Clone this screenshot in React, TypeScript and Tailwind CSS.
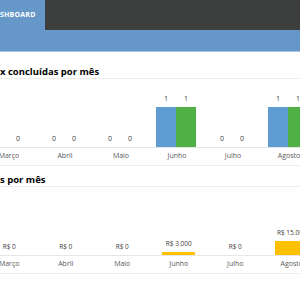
const months = ["Março", "Abril", "Maio", "Junho", "Julho", "Agosto"];

const tasks = [
  { a: 0, b: 0 },
  { a: 0, b: 0 },
  { a: 0, b: 0 },
  { a: 1, b: 1 },
  { a: 0, b: 0 },
  { a: 1, b: 1 },
];

const revenue = [0, 0, 0, 3000, 0, 15000];

function fmt(v: number) {
  return "R$ " + v.toLocaleString("pt-BR");
}

function Bar({ value, color, scale, width }: { value: number; color: string; scale: number; width: number }) {
  return (
    <div className="flex flex-col items-center justify-end" style={{ width }}>
      <span className="text-[7px] leading-[8px] text-[#404040] whitespace-nowrap mb-[4px]">{value}</span>
      {value > 0 && <div className={color} style={{ height: value * scale, width }} />}
    </div>
  );
}

function MonthRow({ colWidth }: { colWidth: string }) {
  return (
    <div className="flex ml-[-19px] h-[18px] items-center border-b border-[#ececec]">
      {months.map((m) => (
        <div key={m} className={`${colWidth} shrink-0 text-center text-[7px] text-[#595959]`}>
          {m}
        </div>
      ))}
    </div>
  );
}

export default function App() {
  return (
    <div
      className="w-[300px] h-[300px] overflow-hidden bg-white"
      style={{ fontFamily: '"Open Sans", "Liberation Sans", sans-serif' }}
    >
      <div className="flex h-[30px]">
        <div className="w-[45px] bg-[#6598c9] flex items-center">
          <span className="text-[7px] font-bold text-white tracking-[0.2px] whitespace-nowrap">SHBOARD</span>
        </div>
        <div className="flex-1 bg-[#3d3e3e]" />
      </div>
      <div className="h-[22px] bg-[#6598c9] border-b border-[#a8c6e4]" />

      <div className="pt-[14px]">
        <div className="text-[9.5px] leading-[12px] font-bold text-black border-b border-[#ececec]">
          x concluídas por mês
        </div>
      </div>

      <div className="flex ml-[-20px] h-[69px] items-end border-b border-[#e6e6e6]">
        {tasks.map((t, i) => (
          <div key={i} className="w-[56px] shrink-0 flex justify-center items-end">
            <Bar value={t.a} color="bg-[#5f9bd3]" scale={40} width={20} />
            <Bar value={t.b} color="bg-[#4fb043]" scale={40} width={20} />
          </div>
        ))}
      </div>
      <MonthRow colWidth="w-[56px]" />

      <div className="pt-[8px]">
        <div className="text-[9.5px] leading-[12px] font-bold text-black border-b border-[#ececec]">
          s por mês
        </div>
      </div>

      <div className="flex ml-[-19px] h-[69px] items-end border-b border-[#e6e6e6]">
        {revenue.map((v, i) => (
          <div key={i} className="w-[56.5px] shrink-0 flex flex-col items-center justify-end">
            <span className="text-[6.5px] leading-[8px] text-[#404040] whitespace-nowrap mb-[4px]">{fmt(v)}</span>
            {v > 0 && <div className="bg-[#ffc000] w-[33px]" style={{ height: Math.max(2, Math.round((v * 14) / 15000)) }} />}
          </div>
        ))}
      </div>
      <MonthRow colWidth="w-[56.5px]" />
    </div>
  );
}
